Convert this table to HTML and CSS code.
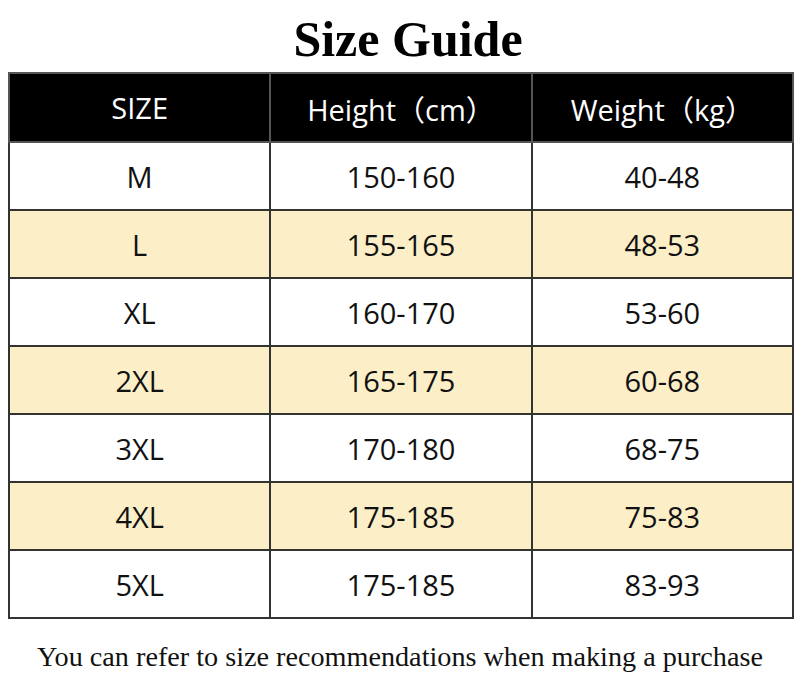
FILE: index.html
```html
<!DOCTYPE html>
<html>
<head>
<meta charset="utf-8">
<link rel="stylesheet" href="styles.css">
</head>
<body>
<h1 class="title">Size Guide</h1>
<table class="sizes">
  <thead>
    <tr><th>SIZE</th><th>Height（cm）</th><th>Weight（kg）</th></tr>
  </thead>
  <tbody>
    <tr><td>M</td><td>150-160</td><td>40-48</td></tr>
    <tr class="alt"><td>L</td><td>155-165</td><td>48-53</td></tr>
    <tr><td>XL</td><td>160-170</td><td>53-60</td></tr>
    <tr class="alt"><td>2XL</td><td>165-175</td><td>60-68</td></tr>
    <tr><td>3XL</td><td>170-180</td><td>68-75</td></tr>
    <tr class="alt"><td>4XL</td><td>175-185</td><td>75-83</td></tr>
    <tr><td>5XL</td><td>175-185</td><td>83-93</td></tr>
  </tbody>
</table>
<p class="note">You can refer to size recommendations when making a purchase</p>
</body>
</html>
```

FILE: styles.css
```css
html, body {
  margin: 0;
  padding: 0;
  background: #ffffff;
}
body {
  width: 800px;
}
.title {
  margin: 0;
  height: 72px;
  line-height: 78px;
  padding-left: 16px;
  text-align: center;
  font-family: "Liberation Serif", serif;
  font-weight: bold;
  font-size: 50px;
  color: #000;
  box-sizing: border-box;
}
.sizes {
  margin-left: 8px;
  width: 786px;
  border-collapse: collapse;
  table-layout: fixed;
  font-family: "Open Sans", "Noto Sans CJK SC", sans-serif;
  font-size: 29px;
  color: #111;
}
.sizes th, .sizes td {
  border: 2px solid #333;
  text-align: center;
  vertical-align: middle;
  padding: 0;
}
.sizes th {
  background: #000;
  color: #fff;
  font-weight: normal;
  height: 67px;
  border-color: #555;
}
.sizes td {
  height: 66px;
}
.sizes tr.alt td {
  background: #fcefc8;
}
.note {
  margin: 22px 0 0;
  text-align: center;
  font-family: "Liberation Serif", serif;
  font-size: 28.2px;
  color: #111;
}
```
